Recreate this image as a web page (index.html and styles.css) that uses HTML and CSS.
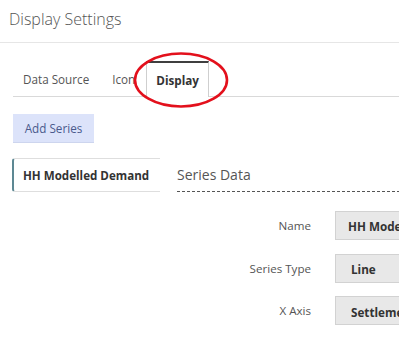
FILE: index.html
```html
<!DOCTYPE html>
<html>
<head>
<meta charset="utf-8">
<link rel="stylesheet" href="styles.css">
</head>
<body>
<div class="page">
  <div class="header"><span class="title">Display Settings</span></div>
  <div class="tabs">
    <div class="tab">Data Source</div>
    <div class="tab icon-tab">Icon</div>
    <div class="tab active">Display</div>
  </div>
  <div class="actions">
    <button class="add-btn">Add Series</button>
  </div>
  <div class="content">
    <div class="series-list">
      <div class="series-item">HH Modelled Demand</div>
    </div>
    <div class="panel">
      <div class="panel-title">Series Data</div>
      <div class="form">
        <div class="row">
          <label class="lbl">Name</label>
          <div class="field">HH Modelled Demand</div>
        </div>
        <div class="row">
          <label class="lbl">Series Type</label>
          <div class="field sel">Line</div>
        </div>
        <div class="row">
          <label class="lbl">X Axis</label>
          <div class="field sel">Settlement Period</div>
        </div>
      </div>
    </div>
  </div>
  <svg class="ring" width="100" height="60" viewBox="0 0 100 60">
    <ellipse cx="48" cy="29" rx="46" ry="26.5" fill="none" stroke="#e3101c" stroke-width="2.6"/>
  </svg>
</div>
</body>
</html>
```
FILE: styles.css
```css
html, body {
  margin: 0;
  padding: 0;
  background: #fff;
  overflow: hidden;
}
.page {
  position: relative;
  width: 399px;
  height: 338px;
  overflow: hidden;
  font-family: "Open Sans", "Noto Sans", sans-serif;
  color: #333;
}
.header {
  height: 42px;
  border-bottom: 1px solid #e6e6e6;
  padding-left: 9px;
  display: flex;
  align-items: center;
}
.title {
  font-size: 16px;
  font-weight: 300;
  color: #555;
  margin-top: -4px;
}
.tabs {
  display: flex;
  margin: 18px 0 0 13px;
  border-bottom: 1px solid #d9d9d9;
  height: 35px;
}
.tab {
  font-size: 11.7px;
  color: #555;
  padding: 0 10px 0 10px;
  display: flex;
  align-items: center;
  height: 35px;
  box-sizing: border-box;
  padding-top: 1px;
}
.tab:first-child { padding-right: 13px; }
.tab.icon-tab { padding-right: 11px; }
.tab.active {
  font-weight: 700;
  color: #333;
  border-top: 2px solid #3f3f3f;
  border-left: 1px solid #cfcfcf;
  border-right: 1px solid #cfcfcf;
  background: #fff;
  height: 36px;
  padding: 0 9px;
}
.actions {
  padding: 17px 0 0 13px;
}
.add-btn {
  font-family: "Open Sans", "Noto Sans", sans-serif;
  font-size: 11.7px;
  color: #4a5a8c;
  background: #dce3fa;
  border: none;
  border-bottom: 1px solid #cdd5ee;
  height: 29px;
  width: 81px;
  padding: 0;
  margin: 0;
}
.content {
  display: flex;
  margin-top: 15px;
}
.series-list {
  margin-left: 12px;
}
.series-item {
  height: 34px;
  box-sizing: border-box;
  border: 1px solid #dedede;
  border-left: 2px solid #5d8893;
  border-right: none;
  border-radius: 3px 0 0 3px;
  font-size: 11.6px;
  font-weight: 700;
  color: #333;
  display: flex;
  align-items: center;
  padding-left: 9px;
  width: 148px;
}
.panel {
  margin-left: 17px;
  flex: 1;
}
.panel-title {
  font-size: 14px;
  color: #555;
  height: 33px;
  line-height: 34px;
  border-bottom: 1px dashed #555;
}
.form {
  padding-top: 19px;
}
.row {
  display: flex;
  align-items: center;
  height: 29px;
  margin-bottom: 13.5px;
}
.lbl {
  width: 134px;
  text-align: right;
  font-size: 11.6px;
  color: #555;
  flex: none;
}
.field {
  margin-left: 24px;
  flex: none;
  width: 160px;
  height: 29px;
  box-sizing: border-box;
  background: #e8e8e8;
  border: 1px solid #d2d2d2;
  font-size: 11.7px;
  font-weight: 700;
  color: #333;
  display: flex;
  align-items: center;
  padding-left: 12px;
  white-space: nowrap;
}
.field.sel {
  padding-left: 15px;
  padding-top: 2px;
}
.ring {
  position: absolute;
  left: 133px;
  top: 51px;
}
```
